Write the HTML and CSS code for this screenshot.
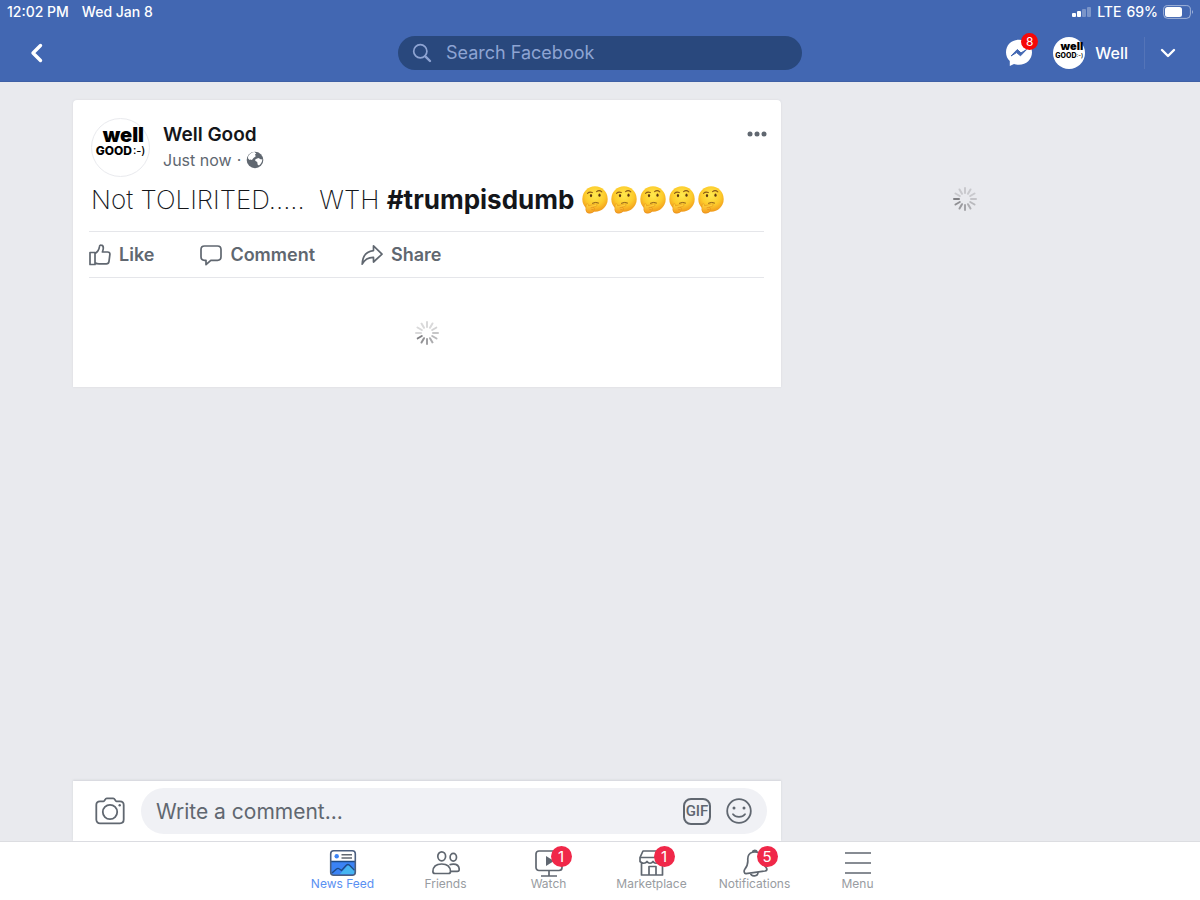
FILE: index.html
```html
<!DOCTYPE html>
<html lang="en">
<head>
	<meta charset="utf-8">
	<meta name="viewport" content="width=device-width, initial-scale=1">
	<title>Facebook</title>
	<link rel="stylesheet" href="styles.css">
</head>
<body>

<!-- shared shapes -->
<svg class="defs" aria-hidden="true">
	<defs>
		<radialGradient id="face" cx="50%" cy="35%" r="65%">
			<stop offset="0" stop-color="#ffe94e"/>
			<stop offset="0.6" stop-color="#fdcb2b"/>
			<stop offset="1" stop-color="#f19a1c"/>
		</radialGradient>
		<linearGradient id="hand" x1="0" y1="0" x2="0" y2="1">
			<stop offset="0" stop-color="#ffd93f"/>
			<stop offset="1" stop-color="#f59a1e"/>
		</linearGradient>
		<symbol id="thinking" viewBox="0 0 26 28">
			<circle cx="13" cy="13" r="12.7" fill="url(#face)"/>
			<path d="M5.500 7.400q2-2 4.800-.8M14.600 5.600q2.600-2 5.200.2" fill="none" stroke="#8a5a18" stroke-width="1.100" stroke-linecap="round"/>
			<ellipse cx="9" cy="9.600" rx="1.100" ry="1.600" fill="#5d3711"/>
			<ellipse cx="17.500" cy="9.200" rx="1.100" ry="1.600" fill="#5d3711"/>
			<path d="M10.500 17.200q3-1.600 6-.2" fill="none" stroke="#8a5a18" stroke-width="1" stroke-linecap="round"/>
			<path d="M4 20.200q-.2-2.500 1.400-2.400 1 .1 1.200 2l6.700-1.700q1.800-.3 1.900.8.1 1-1.600 1.500l-2.600.9q2 .7 1.500 2.400-.4 3.400-4.700 3.600-3.800 0-4-3.400z" fill="url(#hand)" stroke="#e08a18" stroke-width=".5"/>
			<path d="M8.600 21.900l2.600-.7M9.300 23.700h2.400" stroke="#d87812" stroke-width=".5"/>
		</symbol>
		<symbol id="spinner" viewBox="-12 -12 24 24">
			<g stroke="#808084" stroke-width="2" stroke-linecap="round">
				<path d="M-6 0h-5"/>
				<path d="M-6 0h-5" transform="rotate(-30)" opacity=".85"/>
				<path d="M-6 0h-5" transform="rotate(-60)" opacity=".75"/>
				<path d="M-6 0h-5" transform="rotate(-90)" opacity=".65"/>
				<path d="M-6 0h-5" transform="rotate(-120)" opacity=".55"/>
				<path d="M-6 0h-5" transform="rotate(-150)" opacity=".45"/>
				<path d="M-6 0h-5" transform="rotate(180)" opacity=".35"/>
				<path d="M-6 0h-5" transform="rotate(150)" opacity=".3"/>
				<path d="M-6 0h-5" transform="rotate(120)" opacity=".3"/>
				<path d="M-6 0h-5" transform="rotate(90)" opacity=".3"/>
				<path d="M-6 0h-5" transform="rotate(60)" opacity=".3"/>
				<path d="M-6 0h-5" transform="rotate(30)" opacity=".3"/>
			</g>
		</symbol>
	</defs>
</svg>

<header class="top">
	<div class="status">
		<span>12:02 PM</span>
		<span>Wed Jan 8</span>
		<span class="status-right">
			<svg width="20" height="12" viewBox="0 0 20 12" fill="#fff">
				<rect x="0" y="7" width="4" height="4" rx="1"/>
				<rect x="5" y="5" width="4" height="6" rx="1"/>
				<rect x="10" y="3" width="4" height="8" rx="1" opacity=".3"/>
				<rect x="15" y="1" width="4" height="10" rx="1" opacity=".3"/>
			</svg>
			<span>LTE</span>
			<span>69%</span>
			<svg width="31" height="14" viewBox="0 0 31 14">
				<rect x=".6" y=".6" width="26.8" height="12.8" rx="4" fill="none" stroke="#fff" stroke-opacity=".5"/>
				<rect x="2" y="2" width="17" height="10" rx="2.5" fill="#fff"/>
				<path d="M29 5q2 2 0 4z" fill="#fff" opacity=".5"/>
			</svg>
		</span>
	</div>
	<div class="navbar">
		<button class="back" aria-label="Back">
			<svg width="14" height="20" viewBox="0 0 14 20"><path d="M10.5 2.5L3 10l7.500 7.500" fill="none" stroke="#fff" stroke-width="3.400" stroke-linecap="round" stroke-linejoin="round"/></svg>
		</button>
		<label class="search">
			<svg width="20" height="20" viewBox="0 0 20 20" fill="none" stroke="#8ea4d3" stroke-linecap="round"><circle cx="8.300" cy="8.300" r="6.600" stroke-width="1.700"/><path d="M13.300 13.300l4.700 4.700" stroke-width="2.400"/></svg>
			<input type="text" placeholder="Search Facebook" aria-label="Search Facebook">
		</label>
		<div class="account">
			<button class="messenger" aria-label="Messenger">
				<svg width="28" height="28" viewBox="0 0 28 28"><path d="M14 .8C6.600.8 1 6.100 1 13.300c0 3.600 1.400 6.500 3.800 8.700v5l4.200-2.100c1.600.6 3.200.9 5 .9 7.400 0 13-5.300 13-12.500S21.400.8 14 .8z" fill="#fff"/><path d="M6 17l6.300-6.500 3.700 3.400 5.500-3.300-6 6.200-3.900-3.200z" fill="#4267b2" stroke="#4267b2" stroke-linejoin="round"/></svg>
				<span class="badge badge-small">8</span>
			</button>
			<a class="profile" href="#">
				<span class="avatar avatar-small"><b>well</b><span class="good">GOOD<i>:-)</i></span></span>
				<span>Well</span>
			</a>
			<button class="more" aria-label="Account menu">
				<svg width="16" height="10" viewBox="0 0 16 10"><path d="M2 2l6 6 6-6" fill="none" stroke="#fff" stroke-width="2.400" stroke-linecap="round" stroke-linejoin="round"/></svg>
			</button>
		</div>
	</div>
</header>

<main class="content columns">
	<article class="post">
		<div class="post-head">
			<span class="avatar"><b>well</b><span class="good">GOOD<i>:-)</i></span></span>
			<div class="byline">
				<a class="name" href="#">Well Good</a>
				<span class="time">Just now <span class="dot">·</span>
					<svg width="18" height="18" viewBox="0 0 18 18"><circle cx="9" cy="9" r="8.300" fill="#606770"/><path d="M2.200 5.200C3.600 2.700 6 1.200 8.600 1.100l1.700 1.600-1.400.9.900 1.700-2.300 1.600-1.600 2-1.500-.3L3.600 9 1.900 7.200zM9.400 8.200l3-1.100 2.700 1.300 1.200-.3c.1 2.600-1.300 5-3.300 6.500l-1.300-.8-.5-2.700-2-1.300z" fill="#fff"/></svg>
				</span>
			</div>
			<button class="dots" aria-label="Post options">
				<svg width="20" height="6" viewBox="0 0 20 6" fill="#606770"><circle cx="3" cy="3" r="2.500"/><circle cx="10" cy="3" r="2.500"/><circle cx="17" cy="3" r="2.500"/></svg>
			</button>
		</div>
		<p class="post-text">Not TOLIRITED..... &nbsp;WTH <a href="#">#trumpisdumb</a> <span class="emojis" role="img" aria-label="thinking faces"><svg><use href="#thinking"/></svg><svg><use href="#thinking"/></svg><svg><use href="#thinking"/></svg><svg><use href="#thinking"/></svg><svg><use href="#thinking"/></svg></span></p>
		<div class="actions">
			<button>
				<svg width="22" height="22" viewBox="0 0 22 22"><path d="M1 8.500h5v12H1zM6 9.500c2.300-1.300 4-3.600 4.400-6.600.1-1.200.7-1.900 1.700-1.800 1.500.1 2.300 1.400 2.200 3.200-.1 1.300-.4 2.500-.9 3.700h5.200c1.600 0 2.400 1 2.300 2.300l-.9 7c-.2 1.600-1.100 2.500-2.700 2.500H10c-1.600 0-2.700-.4-4-1.100"/></svg>
				Like
			</button>
			<button>
				<svg width="22" height="22" viewBox="0 0 22 22"><path d="M4.500 2h13C19.600 2 21 3.400 21 5.500v7.300c0 2.100-1.400 3.500-3.500 3.500h-6.700L6 20.600v-4.300H4.500C2.400 16.300 1 14.900 1 12.800V5.500C1 3.400 2.400 2 4.500 2z"/></svg>
				Comment
			</button>
			<button>
				<svg width="22" height="22" viewBox="0 0 22 22"><path d="M12.500 1.800L21 10.200l-8.500 7.800v-4.600C7.500 13.300 4 15 1.200 20.200 1.500 12.700 5.300 7.300 12.500 6.600z"/></svg>
				Share
			</button>
		</div>
		<div class="loading"><svg class="spinner turned"><use href="#spinner"/></svg></div>
	</article>
	<aside class="side"><svg class="spinner"><use href="#spinner"/></svg></aside>
</main>

<footer class="bottom">
	<div class="columns">
		<form class="write">
			<button type="button" aria-label="Add photo">
				<svg width="30" height="28" viewBox="0 0 30 28" fill="none" stroke="#606770" stroke-width="1.800" stroke-linejoin="round"><path d="M5 4.300h3.500c1.300 0 1.500-2.900 3.300-2.900h6.400c1.800 0 2 2.900 3.300 2.900H25c2.200 0 3.700 1.500 3.700 3.700v14.600c0 2.200-1.500 3.700-3.700 3.700H5c-2.200 0-3.700-1.500-3.700-3.700V8c0-2.200 1.500-3.700 3.700-3.700z"/><circle cx="15" cy="15" r="7.200"/><circle cx="24.700" cy="8.300" r="1.200" fill="#606770" stroke="none"/></svg>
			</button>
			<div class="write-box">
				<input type="text" placeholder="Write a comment..." aria-label="Write a comment">
				<button type="button" class="gif">GIF</button>
				<button type="button" aria-label="Emoji">
					<svg width="26" height="26" viewBox="0 0 26 26" fill="none" stroke="#606770" stroke-width="1.800" stroke-linecap="round"><circle cx="13" cy="13" r="11.800"/><path d="M7 16.200c2.700 3.500 9.300 3.500 12 0"/><g fill="#606770" stroke="none"><circle cx="8" cy="10" r="1.500"/><circle cx="18" cy="10" r="1.500"/></g></svg>
				</button>
			</div>
		</form>
	</div>
	<nav class="tabs">
		<a class="active" href="#">
			<svg width="28" height="28" viewBox="0 0 28 28"><rect x="1.700" y="1.700" width="24.600" height="24.600" rx="3" fill="#fff"/><path d="M2 12.500h24V24q0 2-2 2H4q-2 0-2-2z" fill="#3b83f5"/><path d="M11 25l3.500-4 5-5.500 6 4.500V25z" fill="#46b5f2"/><path d="M3 24l4.500-4q1.500-1.200 3 0l2 1.500 4.800-5.300q1.700-1.500 3.200 0l5 5M2 12.500h24" fill="none" stroke="#1d4b87" stroke-width="1.400"/><rect x="1.700" y="1.700" width="24.600" height="24.600" rx="3" fill="none" stroke="#4b5f80" stroke-width="1.600"/><circle cx="7.700" cy="7.200" r="2.200" fill="#3b83f5"/><path d="M12.500 5.700h10.500M12.500 9h10.500" stroke="#606770" stroke-width="1.500"/></svg>
			News Feed
		</a>
		<a href="#">
			<svg width="28" height="28" viewBox="0 0 28 28"><ellipse cx="9.700" cy="7.300" rx="3.900" ry="4.500"/><ellipse cx="21.300" cy="8.300" rx="3.200" ry="3.900"/><path d="M3 24.500h13.500c1.200 0 2-.8 2-2C18.300 18 15.500 15 9.700 15S1 18 .9 22.500c0 1.200.9 2 2.100 2zM17.500 15.700c1-.4 2.200-.6 3.800-.6 4 0 5.900 2.400 5.900 5.400 0 1.200-.7 1.900-1.800 1.900h-6.800"/></svg>
			Friends
		</a>
		<a href="#">
			<svg width="28" height="28" viewBox="0 0 28 28"><rect x="1" y="2" width="26" height="19.500" rx="3"/><path d="M11 7v10l8-5z" fill="#606770" stroke="none"/><path d="M14 21.500V27M6 27h16"/></svg>
			Watch
			<span class="badge">1</span>
		</a>
		<a href="#">
			<svg width="28" height="28" viewBox="0 0 28 28"><path d="M5 2h18l3.500 6.500v4c-1.500 2.300-4 2.300-5.500 0-1.500 2.300-4.500 2.300-6 0-1.500 2.300-4.500 2.300-6 0-1.500 2.300-4.500 2.300-7 0v-4zM2 8.500h24M3.500 14v12h21V14M11 26v-8.500h7V26"/></svg>
			Marketplace
			<span class="badge">1</span>
		</a>
		<a href="#">
			<svg width="28" height="28" viewBox="0 0 28 28"><path d="M11.500 3.200c.3-2.500 4-2.500 4.600-.2M11.500 3.200C8 4.200 6.500 7.200 6.800 11c.3 4.300-.3 6-3 9.200-1.200 1.500-.7 4.600 1.200 4.400L24 22c1.700-.3 2.500-1.400 1.400-3-2.400-2.800-3.700-5-3.700-9-.2-4.500-4.700-8.200-10.200-6.800zM9.500 24.200c.8 4 7.500 3.500 7.500-1"/></svg>
			Notifications
			<span class="badge">5</span>
		</a>
		<a href="#">
			<svg width="28" height="28" viewBox="0 0 28 28"><path d="M1 4h26M1 14h26M1 24h26"/></svg>
			Menu
		</a>
	</nav>
</footer>

</body>
</html>
```
FILE: styles.css
```css
*{
	box-sizing: border-box;
}

body{
	margin: 0;
	min-height: 100vh;
	display: flex;
	flex-direction: column;
	background: #e9eaee;
	color: #14161a;
	font-family: Inter, "Liberation Sans", sans-serif;
}

a{
	color: inherit;
	text-decoration: none;
}

button{
	border: none;
	background: none;
	padding: 0;
	color: inherit;
	font: inherit;
	cursor: pointer;
}

input{
	flex: 1;
	min-width: 0;
	border: none;
	background: none;
	padding: 0;
	font: inherit;
	outline: none;
}

svg{
	display: block;
	flex: none;
}

.defs{
	position: absolute;
	width: 0;
	height: 0;
}

/* top bar */
.top{
	background: #4267b2;
	color: #fff;
	box-shadow: inset 0 -1px #3f60a5;
}

.status{
	display: flex;
	gap: 13px;
	height: 23px;
	padding: 0 6px 0 7px;
	align-items: center;
	font-size: 14px;
	font-weight: 500;
}

.status-right{
	display: flex;
	align-items: center;
	gap: 5px;
	margin-left: auto;
}

.navbar{
	display: grid;
	grid-template-columns: 1fr minmax(0, 404px) 1fr;
	align-items: center;
	height: 59px;
	padding: 0 24px;
}

.back{
	justify-self: start;
	padding: 0 6px;
}

.search{
	display: flex;
	align-items: center;
	gap: 14px;
	height: 34px;
	padding: 0 14px;
	border-radius: 17px;
	background: #29487d;
	font-size: 18px;
}

.search input{
	color: #fff;
}

.search input::placeholder{
	color: #8ea4d3;
	opacity: 1;
}

.account{
	display: flex;
	align-items: center;
	justify-content: flex-end;
	gap: 16px;
}

.messenger{
	position: relative;
	margin-right: 4px;
}

.profile{
	display: flex;
	align-items: center;
	gap: 10px;
	font-size: 16px;
	font-weight: 500;
}

.more{
	height: 32px;
	padding-left: 15px;
	border-left: 1px solid #5474b8;
}

.badge{
	position: absolute;
	top: 4px;
	left: 52%;
	width: 21px;
	height: 21px;
	border-radius: 50%;
	background: #f02849;
	color: #fff;
	font-size: 15px;
	line-height: 21px;
	text-align: center;
}

.badge-small{
	top: -6px;
	left: 16px;
	width: 17px;
	height: 17px;
	background: #f60808;
	font-size: 12px;
	line-height: 17px;
}

/* round picture with the page's lettering */
.avatar{
	display: flex;
	flex-direction: column;
	align-items: center;
	justify-content: center;
	flex: none;
	width: 59px;
	height: 59px;
	padding-bottom: 10px;
	border: 1px solid #e9eaee;
	border-radius: 50%;
	background: #fff;
	color: #000;
}

.avatar b{
	align-self: flex-end;
	padding-right: 5px;
	font-size: 20px;
	font-weight: 900;
	line-height: 16px;
}

.good{
	display: flex;
	align-items: center;
	gap: 1px;
	font-size: 12px;
	font-weight: 800;
	line-height: 16px;
}

.good i{
	font-size: 11px;
	font-style: normal;
	font-weight: 500;
}

.avatar-small{
	width: 32px;
	height: 32px;
	padding-bottom: 4px;
	border: none;
}

.avatar-small b{
	padding-right: 2px;
	font-size: 11px;
	line-height: 9px;
}

.avatar-small .good{
	gap: 0;
	font-size: 7px;
	line-height: 9px;
}

.avatar-small .good i{
	font-size: 6px;
}

/* feed and side column */
.columns{
	display: grid;
	grid-template-columns: minmax(0, 708fr) minmax(0, 336fr);
	gap: 16px;
	padding: 0 67px 0 73px;
}

.content{
	flex: 1;
	align-items: start;
	padding-top: 18px;
}

.post{
	border-radius: 4px 4px 0 0;
	background: #fff;
	box-shadow: 0 0 2px #d3d5da;
	padding: 18px 17px 0 16px;
}

.post-head{
	display: flex;
	gap: 13px;
	padding-left: 2px;
}

.byline{
	display: flex;
	flex-direction: column;
	gap: 1px;
	flex: 1;
	padding-top: 5px;
}

.name{
	font-size: 19px;
	font-weight: 600;
	line-height: 24px;
}

.time{
	display: flex;
	align-items: center;
	gap: 5px;
	color: #606770;
	font-size: 16px;
	line-height: 24px;
}

.dots{
	align-self: flex-start;
	height: 32px;
	margin-right: -3px;
}

.post-text{
	margin: 0;
	padding: 5px 2px 13px;
	border-bottom: 1px solid #e5e6ea;
	font-size: 26px;
	font-weight: 250;
	line-height: 36px;
}

.post-text a{
	font-weight: 650;
}

.emojis{
	display: inline-flex;
	gap: 3px;
	vertical-align: -5px;
}

.emojis svg{
	width: 26px;
	height: 28px;
}

.actions{
	display: flex;
	gap: 46px;
	height: 46px;
	border-bottom: 1px solid #e5e6ea;
	color: #606770;
	font-size: 18px;
	font-weight: 600;
}

.actions button{
	display: flex;
	align-items: center;
	gap: 8px;
}

.actions svg{
	fill: none;
	stroke: #606770;
	stroke-width: 1.7;
	stroke-linejoin: round;
}

.loading{
	display: flex;
	align-items: center;
	justify-content: center;
	height: 109px;
}

.spinner{
	width: 24px;
	height: 24px;
}

.turned{
	transform: rotate(-30deg);
}

.side{
	display: flex;
	justify-content: center;
	padding-top: 87px;
}

/* comment box */
.write{
	display: flex;
	align-items: center;
	gap: 16px;
	padding: 7px 14px 7px 22px;
	background: #fff;
	box-shadow: 0 -1px 2px #d3d5da;
}

.write-box{
	display: flex;
	flex: 1;
	align-items: center;
	gap: 15px;
	min-width: 0;
	height: 46px;
	padding: 0 15px;
	border-radius: 23px;
	background: #f0f1f5;
	font-size: 21px;
}

.write-box input::placeholder{
	color: #606770;
	opacity: 1;
}

.gif{
	width: 28px;
	height: 27px;
	border: 2px solid #606770;
	border-radius: 8px;
	color: #606770;
	font-family: Roboto, sans-serif;
	font-size: 15px;
	font-weight: 500;
	line-height: 23px;
}

/* bottom tabs */
.bottom{
	background: #e9eaee;
}

.tabs{
	display: flex;
	justify-content: center;
	height: 59px;
	border-top: 1px solid #dcdde1;
	background: #fff;
}

.tabs a{
	position: relative;
	display: flex;
	flex-direction: column;
	align-items: center;
	flex: 0 1 103px;
	padding-top: 7px;
	color: #989ca1;
	font-size: 12px;
	line-height: 14px;
}

.tabs .active{
	color: #5a90f2;
}

.tabs svg{
	fill: none;
	stroke: #606770;
	stroke-width: 1.7;
	stroke-linejoin: round;
}

.tabs .active svg{
	stroke: none;
}
```
